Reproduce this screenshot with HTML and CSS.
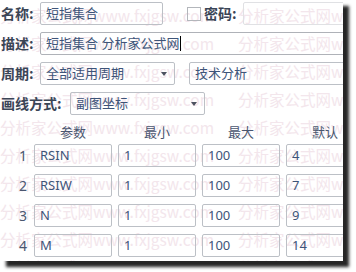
FILE: index.html
```html
<!DOCTYPE html>
<html lang="zh-CN">
<head>
<meta charset="utf-8">
<title>短指集合</title>
<link rel="stylesheet" href="styles.css">
</head>
<body>
<div class="panel">
  <div class="watermark" aria-hidden="true">
    <div class="wm-line"><span>分析家公式网www.fxjgsw.com</span><span>分析家公式网www.fxjgsw.com</span></div>
    <div class="wm-line"><span>分析家公式网www.fxjgsw.com</span><span>分析家公式网www.fxjgsw.com</span></div>
    <div class="wm-line"><span>分析家公式网www.fxjgsw.com</span><span>分析家公式网www.fxjgsw.com</span></div>
    <div class="wm-line"><span>分析家公式网www.fxjgsw.com</span><span>分析家公式网www.fxjgsw.com</span></div>
    <div class="wm-line"><span>分析家公式网www.fxjgsw.com</span><span>分析家公式网www.fxjgsw.com</span></div>
    <div class="wm-line"><span>分析家公式网www.fxjgsw.com</span><span>分析家公式网www.fxjgsw.com</span></div>
    <div class="wm-line"><span>分析家公式网www.fxjgsw.com</span><span>分析家公式网www.fxjgsw.com</span></div>
    <div class="wm-line"><span>分析家公式网www.fxjgsw.com</span><span>分析家公式网www.fxjgsw.com</span></div>
    <div class="wm-line"><span>分析家公式网www.fxjgsw.com</span><span>分析家公式网www.fxjgsw.com</span></div>
    <div class="wm-line"><span>分析家公式网www.fxjgsw.com</span><span>分析家公式网www.fxjgsw.com</span></div>
  </div>
  <div class="form">
    <div class="row">
      <div class="label w40">名称:</div>
      <div class="field name">短指集合</div>
      <div class="check"></div>
      <div class="label pw">密码:</div>
      <div class="field pwd"></div>
    </div>
    <div class="row">
      <div class="label w40">描述:</div>
      <div class="field desc">短指集合 分析家公式网<span class="caret"></span></div>
    </div>
    <div class="row">
      <div class="label w40">周期:</div>
      <div class="field select">全部适用周期<span class="arrow"></span></div>
      <div class="field kind">技术分析</div>
    </div>
    <div class="row">
      <div class="label w70">画线方式:</div>
      <div class="field select">副图坐标<span class="arrow"></span></div>
    </div>
    <div class="table">
      <div class="thead">
        <div></div>
        <div class="th">参数</div>
        <div class="th">最小</div>
        <div class="th">最大</div>
        <div class="th">默认</div>
      </div>
      <div class="tbody">
        <div class="num">1</div><div class="field">RSIN</div><div class="field">1</div><div class="field">100</div><div class="field">4</div>
        <div class="num">2</div><div class="field">RSIW</div><div class="field">1</div><div class="field">100</div><div class="field">7</div>
        <div class="num">3</div><div class="field">N</div><div class="field">1</div><div class="field">100</div><div class="field">9</div>
        <div class="num">4</div><div class="field">M</div><div class="field">1</div><div class="field">100</div><div class="field">14</div>
      </div>
    </div>
  </div>
</div>
</body>
</html>
```

FILE: styles.css
```css
html, body {
  margin: 0;
  padding: 0;
  background: #ffffff;
}
body {
  width: 356px;
  height: 272px;
  overflow: hidden;
  font-family: "Noto Sans", "Noto Sans CJK SC", sans-serif;
  font-size: 13px;
}
.panel {
  position: relative;
  width: 343px;
  height: 261px;
  background: #ffffff;
  overflow: hidden;
  box-shadow: 6px 6px 3px rgba(20, 20, 20, 0.92);
}
.watermark {
  position: absolute;
  left: 0;
  top: 1px;
  z-index: 0;
  display: flex;
  flex-direction: column;
  font-family: "Noto Sans CJK SC", "Noto Sans", sans-serif;
  font-size: 15.5px;
  color: #f3e6ec;
  white-space: nowrap;
}
.wm-line {
  display: flex;
  height: 28px;
  line-height: 28px;
}
.wm-line span {
  width: 238px;
  flex-shrink: 0;
}
.form {
  position: relative;
  z-index: 1;
  padding-top: 2px;
  display: flex;
  flex-direction: column;
  gap: 7px;
}
.row {
  display: flex;
  align-items: center;
  height: 23px;
}
.label {
  flex-shrink: 0;
  padding-left: 1px;
  font-family: "Noto Sans CJK SC", "Noto Sans", sans-serif;
  font-weight: bold;
  font-size: 14px;
  color: #3a4556;
  line-height: 23px;
  box-sizing: border-box;
}
.w40 { width: 40px; }
.w70 { width: 70px; }
.field {
  position: relative;
  flex-shrink: 0;
  box-sizing: border-box;
  height: 23px;
  border: 1px solid #bcc0c6;
  border-radius: 2px;
  padding: 0 5px;
  line-height: 21px;
  color: #3d5479;
  background: transparent;
  white-space: nowrap;
  font-family: "Noto Sans", "Noto Sans CJK SC", sans-serif;
  font-size: 13px;
}
.name { width: 123px; }
.check {
  flex-shrink: 0;
  width: 14px;
  height: 14px;
  box-sizing: border-box;
  border: 1px solid #b3b6bb;
  margin-left: 24px;
}
.pw { margin-left: 2px; }
.pwd {
  width: 140px;
  margin-left: 6px;
  border-color: #e0e1e4;
}
.desc {
  width: 330px;
  border-color: #afb2b8;
}
.caret {
  display: inline-block;
  width: 1px;
  height: 15px;
  background: #000;
  vertical-align: -3px;
  margin-left: 1px;
}
.select { width: 135px; }
.arrow {
  position: absolute;
  right: 7px;
  top: 9px;
  width: 0;
  height: 0;
  border-left: 3.5px solid transparent;
  border-right: 3.5px solid transparent;
  border-top: 4px solid #4d5360;
}
.kind {
  width: 180px;
  margin-left: 14px;
}
.table {
  display: flex;
  flex-direction: column;
  margin-top: -1px;
}
.thead, .tbody {
  display: grid;
  grid-template-columns: 28px 78px 78px 78px 78px;
  column-gap: 6px;
}
.thead {
  height: 22px;
  align-items: center;
  margin-bottom: 1px;
}
.th {
  text-align: center;
  color: #4a5670;
  font-family: "Noto Sans CJK SC", "Noto Sans", sans-serif;
  font-size: 13px;
  line-height: 22px;
}
.tbody {
  row-gap: 7px;
  grid-auto-rows: 23px;
}
.num {
  text-align: right;
  padding-right: 1px;
  line-height: 23px;
  color: #4a5670;
  font-size: 14px;
}
.tbody .field {
  width: auto;
}
```
